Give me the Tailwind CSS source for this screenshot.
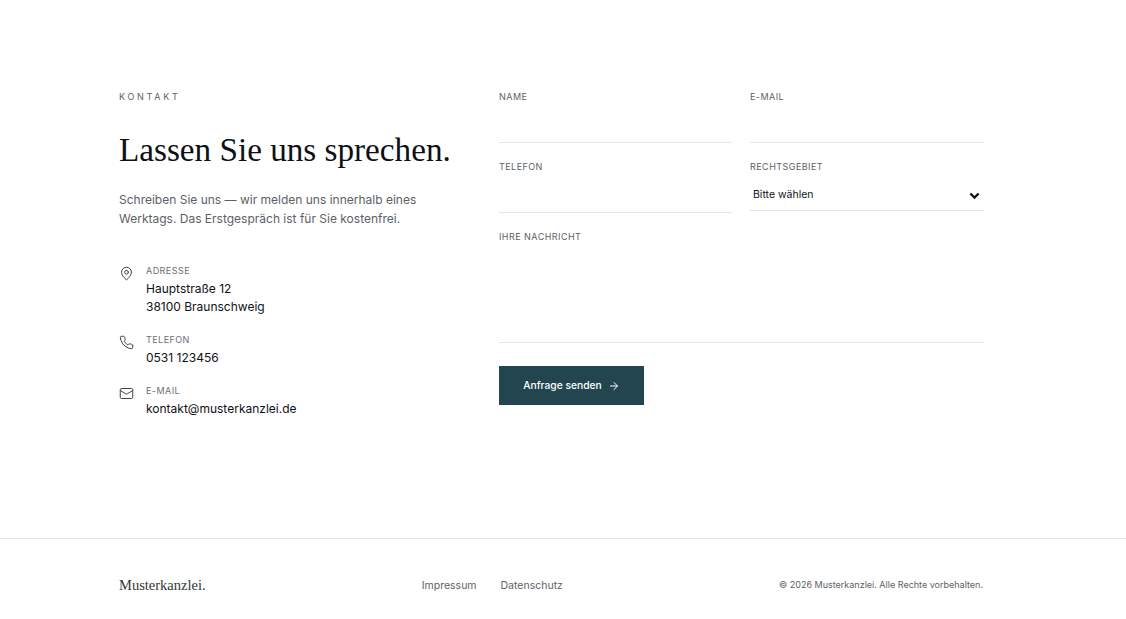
<!DOCTYPE html>
<html lang="de">
<head>
<meta charset="utf-8">
<title>Kontakt</title>
<script src="https://cdn.jsdelivr.net/npm/@tailwindcss/browser@4"></script>
</head>
<body class="bg-white font-['Inter',sans-serif] text-[#0f1115] overflow-hidden">
<main class="h-[538px] pl-[119px] pr-[142px] pt-[91px] grid grid-cols-[332px_485px] gap-x-[48px] content-start">
  <section>
    <p class="text-[9px] leading-[12px] tracking-[0.3em] text-[#5c5f66]">KONTAKT</p>
    <h1 class="mt-[25px] font-['Liberation_Serif',serif] text-[33.2px] leading-[44px] text-[#0d1015] whitespace-nowrap">Lassen Sie uns sprechen.</h1>
    <p class="mt-[18px] text-[12px] leading-[19.2px] text-[#5c5f66]">Schreiben Sie uns — wir melden uns innerhalb eines<br>Werktags. Das Erstgespräch ist für Sie kostenfrei.</p>
    <div class="mt-[36.6px] flex flex-col gap-[18px]">
      <div class="flex gap-[12px]">
        <svg class="w-[15px] h-[15px] mt-[1px] shrink-0 text-[#3f444b]" viewBox="0 0 24 24" fill="none" stroke="currentColor" stroke-width="1.6" stroke-linecap="round" stroke-linejoin="round"><path d="M20 10c0 4.99-5.54 10.19-7.4 11.8a1 1 0 0 1-1.2 0C9.54 20.19 4 14.99 4 10a8 8 0 0 1 16 0"/><circle cx="12" cy="10" r="3"/></svg>
        <div>
          <p class="text-[9px] leading-[12px] tracking-[0.05em] text-[#6b6e75]">ADRESSE</p>
          <p class="mt-[3px] text-[12px] leading-[18px]">Hauptstraße 12<br>38100 Braunschweig</p>
        </div>
      </div>
      <div class="flex gap-[12px]">
        <svg class="w-[15px] h-[15px] mt-[1px] shrink-0 text-[#3f444b]" viewBox="0 0 24 24" fill="none" stroke="currentColor" stroke-width="1.6" stroke-linecap="round" stroke-linejoin="round"><path d="M22 16.92v3a2 2 0 0 1-2.18 2 19.79 19.79 0 0 1-8.63-3.07 19.5 19.5 0 0 1-6-6 19.79 19.79 0 0 1-3.07-8.67A2 2 0 0 1 4.11 2h3a2 2 0 0 1 2 1.72c.13.96.36 1.9.7 2.81a2 2 0 0 1-.45 2.11L8.09 9.91a16 16 0 0 0 6 6l1.27-1.27a2 2 0 0 1 2.11-.45c.91.34 1.85.57 2.81.7A2 2 0 0 1 22 16.92z"/></svg>
        <div>
          <p class="text-[9px] leading-[12px] tracking-[0.05em] text-[#6b6e75]">TELEFON</p>
          <p class="mt-[3px] text-[12px] leading-[18px]">0531 123456</p>
        </div>
      </div>
      <div class="flex gap-[12px]">
        <svg class="w-[15px] h-[15px] mt-[1px] shrink-0 text-[#3f444b]" viewBox="0 0 24 24" fill="none" stroke="currentColor" stroke-width="1.6" stroke-linecap="round" stroke-linejoin="round"><rect x="2" y="4" width="20" height="16" rx="2"/><path d="m22 7-8.97 5.7a1.94 1.94 0 0 1-2.06 0L2 7"/></svg>
        <div>
          <p class="text-[9px] leading-[12px] tracking-[0.05em] text-[#6b6e75]">E-MAIL</p>
          <p class="mt-[3px] text-[12px] leading-[18px]">kontakt@musterkanzlei.de</p>
        </div>
      </div>
    </div>
  </section>
  <form>
    <div class="grid grid-cols-[233px_234px] gap-x-[18px]">
      <label class="block h-[70px]"><span class="block text-[9px] leading-[12px] tracking-[0.05em] text-[#5c5f66]">NAME</span><span class="block h-[40px] border-b border-[#e5e5e5]"></span></label>
      <label class="block h-[70px]"><span class="block text-[9px] leading-[12px] tracking-[0.05em] text-[#5c5f66]">E-MAIL</span><span class="block h-[40px] border-b border-[#e5e5e5]"></span></label>
      <label class="block h-[70px]"><span class="block text-[9px] leading-[12px] tracking-[0.05em] text-[#5c5f66]">TELEFON</span><span class="block h-[40px] border-b border-[#e5e5e5]"></span></label>
      <div class="h-[70px]"><span class="block text-[9px] leading-[12px] tracking-[0.05em] text-[#5c5f66]">RECHTSGEBIET</span>
        <div class="h-[38px] border-b border-[#e5e5e5] flex items-center justify-between px-[3px] pt-[7px]">
          <span class="text-[10.5px] text-[#0f1115]">Bitte wählen</span>
          <svg class="w-[11px] h-[11px] -translate-x-[1px]" viewBox="0 0 12 12" fill="none" stroke="#0f1115" stroke-width="2.4"><path d="M1.5 3.8 6 8.3l4.5-4.5"/></svg>
        </div>
      </div>
    </div>
    <label class="block"><span class="block text-[9px] leading-[12px] tracking-[0.05em] text-[#5c5f66]">IHRE NACHRICHT</span><span class="block h-[100px] border-b border-[#e5e5e5]"></span></label>
    <button type="button" class="mt-[23px] w-[145px] h-[39px] bg-[#234550] text-white text-[10.25px] font-medium flex items-center justify-center gap-[6px]">Anfrage senden
      <svg class="w-[12px] h-[12px]" viewBox="0 0 24 24" fill="none" stroke="currentColor" stroke-width="2" stroke-linecap="round" stroke-linejoin="round"><path d="M5 12h14"/><path d="m12 5 7 7-7 7"/></svg>
    </button>
  </form>
</main>
<footer class="h-[94px] border-t border-[#e5e5e5] pl-[119px] pr-[143px] flex items-center justify-between">
  <span class="font-['Liberation_Serif',serif] text-[14.5px] text-[#33363b]">Musterkanzlei.</span>
  <nav class="flex gap-[24px] text-[10.5px] text-[#5c5f66]"><a>Impressum</a><a>Datenschutz</a></nav>
  <p class="text-[9px] text-[#5c5f66] mb-[1px]">© 2026 Musterkanzlei. Alle Rechte vorbehalten.</p>
</footer>
</body>
</html>
